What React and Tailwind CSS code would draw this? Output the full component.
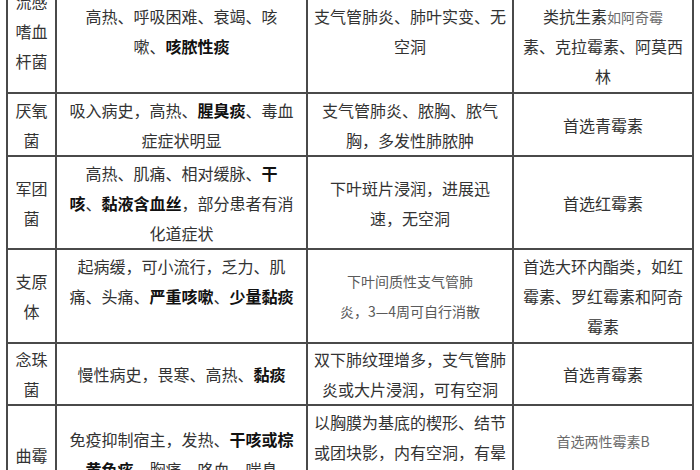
const B = ({ children }) => <b className="font-bold text-[#111]">{children}</b>;
const L = ({ children }) => <span className="text-[14px] text-[#6b6b6b]">{children}</span>;

const Cell = ({ children, className = "" }) => (
  <td className={`border-2 border-[#4a4a4a] text-center align-middle p-0 ${className}`}>
    {children}
  </td>
);

const Lines = ({ items }) => (
  <div className="flex flex-col items-center">
    {items.map((line, i) => (
      <div key={i} className="h-[30px] leading-[30px] whitespace-nowrap">
        {line}
      </div>
    ))}
  </div>
);

export default function App() {
  return (
    <div
      className="w-[700px] h-[470px] overflow-hidden bg-white text-[16px] text-[#333]"
      style={{ fontFamily: '"Noto Sans CJK SC", "Noto Sans", sans-serif' }}
    >
      <table className="table-fixed border-collapse ml-[6px] -mt-[32px] w-[686px]">
        <colgroup>
          <col className="w-[49px]" />
          <col className="w-[251px]" />
          <col className="w-[206px]" />
          <col className="w-[180px]" />
        </colgroup>
        <tbody>
          {/* 流感嗜血杆菌 */}
          <tr className="h-[124px]">
            <Cell>
              <Lines items={["流感", "嗜血", "杆菌"]} />
            </Cell>
            <Cell>
              <Lines
                items={[
                  "高热、呼吸困难、衰竭、咳",
                  <>
                    嗽、<B>咳脓性痰</B>
                  </>,
                ]}
              />
            </Cell>
            <Cell>
              <Lines items={["支气管肺炎、肺叶实变、无", "空洞"]} />
            </Cell>
            <Cell>
              <Lines
                items={[
                  "首选大环内酯",
                  <>
                    类抗生素<L>如阿奇霉</L>
                  </>,
                  "素、克拉霉素、阿莫西",
                  "林",
                ]}
              />
            </Cell>
          </tr>

          {/* 厌氧菌 */}
          <tr className="h-[63px]">
            <Cell>
              <Lines items={["厌氧", "菌"]} />
            </Cell>
            <Cell>
              <Lines
                items={[
                  <>
                    吸入病史，高热、<B>腥臭痰</B>、毒血
                  </>,
                  "症症状明显",
                ]}
              />
            </Cell>
            <Cell>
              <Lines items={["支气管肺炎、脓胸、脓气", "胸，多发性肺脓肿"]} />
            </Cell>
            <Cell>首选青霉素</Cell>
          </tr>

          {/* 军团菌 */}
          <tr className="h-[93px]">
            <Cell>
              <Lines items={["军团", "菌"]} />
            </Cell>
            <Cell>
              <Lines
                items={[
                  <>
                    高热、肌痛、相对缓脉、<B>干</B>
                  </>,
                  <>
                    <B>咳</B>、<B>黏液含血丝</B>，部分患者有消
                  </>,
                  "化道症状",
                ]}
              />
            </Cell>
            <Cell>
              <Lines items={["下叶斑片浸润，进展迅", "速，无空洞"]} />
            </Cell>
            <Cell>首选红霉素</Cell>
          </tr>

          {/* 支原体 */}
          <tr className="h-[94px]">
            <Cell>
              <Lines items={["支原", "体"]} />
            </Cell>
            <Cell>
              <Lines
                items={[
                  "起病缓，可小流行，乏力、肌",
                  <>
                    痛、头痛、<B>严重咳嗽</B>、<B>少量黏痰</B>
                  </>,
                  "",
                ]}
              />
            </Cell>
            <Cell>
              <div className="text-[14px] text-[#5a5a5a]">
                <Lines items={["下叶间质性支气管肺", "炎，3—4周可自行消散"]} />
              </div>
            </Cell>
            <Cell>
              <Lines
                items={["首选大环内酯类，如红", "霉素、罗红霉素和阿奇", "霉素"]}
              />
            </Cell>
          </tr>

          {/* 念珠菌 */}
          <tr className="h-[61px]">
            <Cell>
              <Lines items={["念珠", "菌"]} />
            </Cell>
            <Cell>
              <>
                慢性病史，畏寒、高热、<B>黏痰</B>
              </>
            </Cell>
            <Cell>
              <Lines
                items={["双下肺纹理增多，支气管肺", "炎或大片浸润，可有空洞"]}
              />
            </Cell>
            <Cell>首选青霉素</Cell>
          </tr>

          {/* 曲霉 */}
          <tr className="h-[130px]">
            <Cell className="!align-top pt-[37px]">曲霉</Cell>
            <Cell className="!align-top pt-[18px]">
              <Lines
                items={[
                  <>
                    免疫抑制宿主，发热、<B>干咳或棕</B>
                  </>,
                  <>
                    <B>黄色痰</B>、胸痛、咯血、喘息
                  </>,
                ]}
              />
            </Cell>
            <Cell className="!align-top pt-[1px]">
              <Lines
                items={[
                  "以胸膜为基底的楔形、结节",
                  "或团块影，内有空洞，有晕",
                  "轮征或新月征",
                ]}
              />
            </Cell>
            <Cell className="!align-top pt-[22px]">
              <L>首选两性霉素B</L>
            </Cell>
          </tr>
        </tbody>
      </table>
    </div>
  );
}
